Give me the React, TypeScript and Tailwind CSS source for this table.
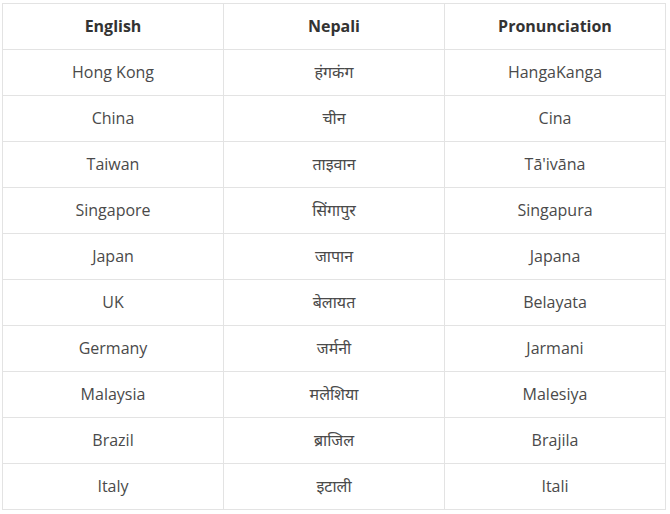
const rows = [
  ['Hong Kong', 'हंगकंग', 'HangaKanga'],
  ['China', 'चीन', 'Cina'],
  ['Taiwan', 'ताइवान', 'Tā\'ivāna'],
  ['Singapore', 'सिंगापुर', 'Singapura'],
  ['Japan', 'जापान', 'Japana'],
  ['UK', 'बेलायत', 'Belayata'],
  ['Germany', 'जर्मनी', 'Jarmani'],
  ['Malaysia', 'मलेशिया', 'Malesiya'],
  ['Brazil', 'ब्राजिल', 'Brajila'],
  ['Italy', 'इटाली', 'Itali'],
];

export default function App() {
  return (
    <div className="min-h-screen bg-white pl-[2px] pt-[3px] font-['Open_Sans','Noto_Sans',sans-serif] text-[16px] text-[#4a4a4a]">
      <table className="w-[664px] table-fixed border-collapse text-center">
        <thead>
          <tr>
            {['English', 'Nepali', 'Pronunciation'].map(h => (
              <th
                key={h}
                className="h-[46px] border border-[#e3e3e3] p-0 pb-[2px] font-bold text-[#333]"
              >
                {h}
              </th>
            ))}
          </tr>
        </thead>
        <tbody>
          {rows.map(row => (
            <tr key={row[0]}>
              {row.map((cell, i) => (
                <td key={i} className="h-[46px] border border-[#e3e3e3] p-0 pb-[2px]">
                  {cell}
                </td>
              ))}
            </tr>
          ))}
        </tbody>
      </table>
    </div>
  );
}
